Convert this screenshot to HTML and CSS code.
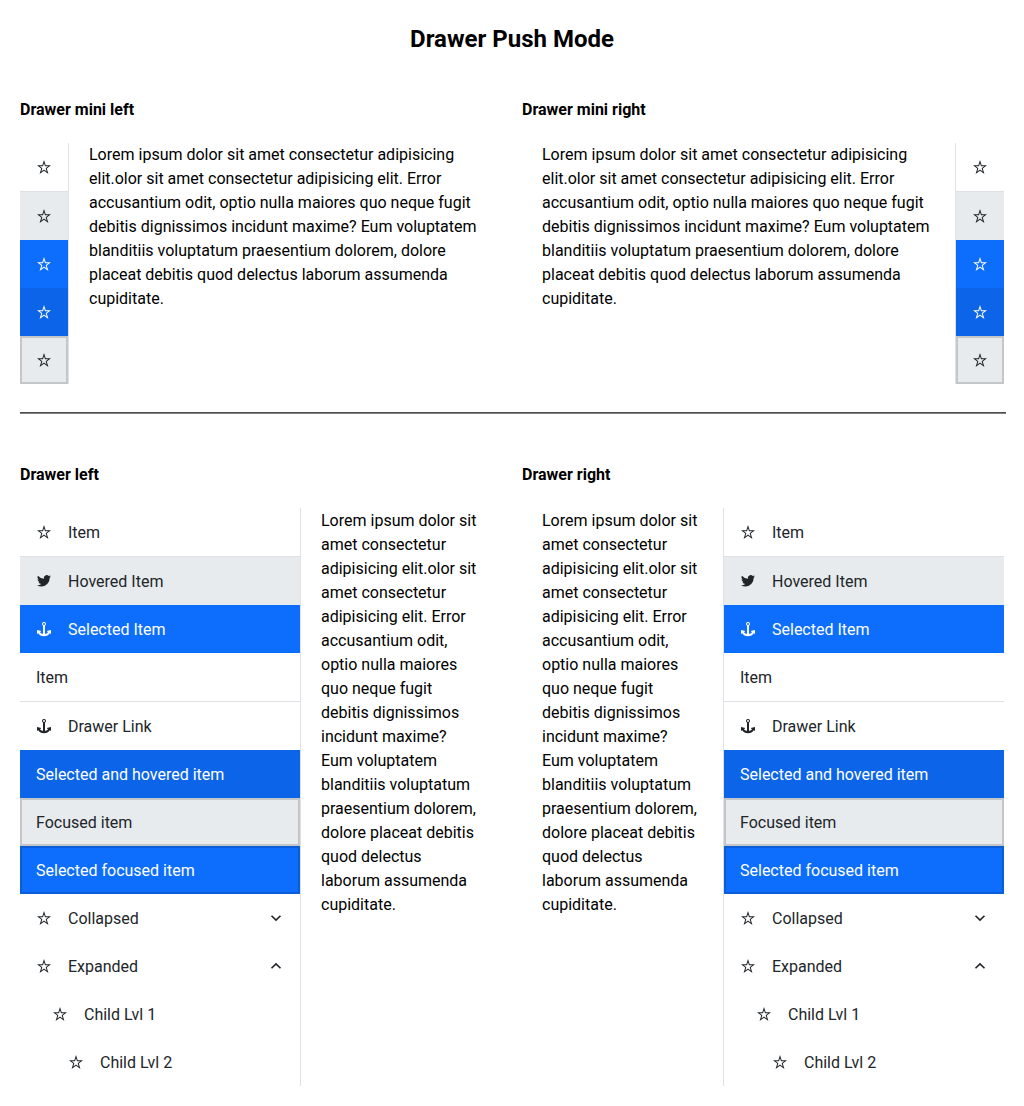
FILE: index.html
```html
<!DOCTYPE html>
<html lang="en">
<head>
<meta charset="utf-8">
<title>Drawer Push Mode</title>
<link rel="stylesheet" href="styles.css">
</head>
<body>
<svg class="sprite" aria-hidden="true">
  <symbol id="star" viewBox="0 0 16 16"><path fill-rule="evenodd" d="M8 1l1.700 5.200H15l-4.200 3.400L12.400 15 8 11.800 3.600 15l1.600-5.400L1 6.200h5.300zM8 4.200L7 7.200H3.850l2.500 2.050-1 3.250L8 10.600l2.650 1.900-1-3.250 2.500-2.050H9z"/></symbol>
  <symbol id="twitter" viewBox="0 0 16 16"><path d="M15 3.500a5.700 5.700 0 0 1-1.650.450 2.900 2.900 0 0 0 1.260-1.590 5.700 5.700 0 0 1-1.820.7 2.870 2.870 0 0 0-4.890 2.620A8.150 8.150 0 0 1 1.980 2.680a2.870 2.870 0 0 0 .890 3.830 2.900 2.900 0 0 1-1.300-.360v.040c0 1.390.990 2.550 2.300 2.810a2.900 2.900 0 0 1-1.300.050 2.870 2.870 0 0 0 2.680 1.990A5.760 5.760 0 0 1 1 12.230a8.130 8.130 0 0 0 4.400 1.290c5.280 0 8.170-4.380 8.170-8.170v-.370A5.800 5.800 0 0 0 15 3.500z"/></symbol>
  <symbol id="anchor" viewBox="0 0 16 16"><path fill-rule="evenodd" d="M8 1a2 2 0 0 1 1 3.730V12.800c1.500-.2 2.500-.8 3-1.600L10.700 10 15 9v4l-1.200-.7C12.700 14.200 10.600 15.200 8 15.200s-4.700-1-5.800-2.900L1 13V9l4.300 1L4 11.200c.5.8 1.500 1.400 3 1.600V4.730A2 2 0 0 1 8 1zm0 1a1 1 0 1 0 0 2 1 1 0 0 0 0-2z"/></symbol>
  <symbol id="down" viewBox="0 0 16 16"><path d="M3.500 5.700L8 10.100l4.500-4.400" fill="none" stroke="currentColor" stroke-width="1.600"/></symbol>
  <symbol id="up" viewBox="0 0 16 16"><path d="M3.500 10.300L8 5.900l4.500 4.400" fill="none" stroke="currentColor" stroke-width="1.600"/></symbol>
</svg>
<h1 class="title">Drawer Push Mode</h1>
<main>
  <div class="grid mini-grid">
    <section>
      <h2 class="heading">Drawer mini left</h2>
      <div class="container">
        <ul class="drawer mini">
          <li class="item"><svg class="icon"><use href="#star"/></svg></li>
          <li class="separator"></li>
          <li class="item hovered"><svg class="icon"><use href="#star"/></svg></li>
          <li class="item selected"><svg class="icon"><use href="#star"/></svg></li>
          <li class="item selected hovered"><svg class="icon"><use href="#star"/></svg></li>
          <li class="item focused"><svg class="icon"><use href="#star"/></svg></li>
        </ul>
        <div class="content">Lorem ipsum dolor sit amet consectetur adipisicing elit.olor sit amet consectetur adipisicing elit. Error accusantium odit, optio nulla maiores quo neque fugit debitis dignissimos incidunt maxime? Eum voluptatem blanditiis voluptatum praesentium dolorem, dolore placeat debitis quod delectus laborum assumenda cupiditate.</div>
      </div>
    </section>
    <section>
      <h2 class="heading">Drawer mini right</h2>
      <div class="container right">
        <ul class="drawer mini">
          <li class="item"><svg class="icon"><use href="#star"/></svg></li>
          <li class="separator"></li>
          <li class="item hovered"><svg class="icon"><use href="#star"/></svg></li>
          <li class="item selected"><svg class="icon"><use href="#star"/></svg></li>
          <li class="item selected hovered"><svg class="icon"><use href="#star"/></svg></li>
          <li class="item focused"><svg class="icon"><use href="#star"/></svg></li>
        </ul>
        <div class="content">Lorem ipsum dolor sit amet consectetur adipisicing elit.olor sit amet consectetur adipisicing elit. Error accusantium odit, optio nulla maiores quo neque fugit debitis dignissimos incidunt maxime? Eum voluptatem blanditiis voluptatum praesentium dolorem, dolore placeat debitis quod delectus laborum assumenda cupiditate.</div>
      </div>
    </section>
  </div>
  <hr class="rule">
  <div class="grid full-grid">
    <section>
      <h2 class="heading">Drawer left</h2>
      <div class="container">
        <ul class="drawer">
          <li class="item"><svg class="icon"><use href="#star"/></svg><span class="label">Item</span></li>
          <li class="separator"></li>
          <li class="item hovered"><svg class="icon"><use href="#twitter"/></svg><span class="label">Hovered Item</span></li>
          <li class="item selected"><svg class="icon"><use href="#anchor"/></svg><span class="label">Selected Item</span></li>
          <li class="item"><span class="label">Item</span></li>
          <li class="separator"></li>
          <li class="item"><svg class="icon"><use href="#anchor"/></svg><span class="label">Drawer Link</span></li>
          <li class="item selected hovered"><span class="label">Selected and hovered item</span></li>
          <li class="item focused"><span class="label">Focused item</span></li>
          <li class="item selected focused"><span class="label">Selected focused item</span></li>
          <li class="item"><svg class="icon"><use href="#star"/></svg><span class="label">Collapsed</span><svg class="icon toggle"><use href="#down"/></svg></li>
          <li class="item"><svg class="icon"><use href="#star"/></svg><span class="label">Expanded</span><svg class="icon toggle"><use href="#up"/></svg></li>
          <li class="item level-1"><svg class="icon"><use href="#star"/></svg><span class="label">Child Lvl 1</span></li>
          <li class="item level-2"><svg class="icon"><use href="#star"/></svg><span class="label">Child Lvl 2</span></li>
        </ul>
        <div class="content">Lorem ipsum dolor sit amet consectetur adipisicing elit.olor sit amet consectetur adipisicing elit. Error accusantium odit, optio nulla maiores quo neque fugit debitis dignissimos incidunt maxime? Eum voluptatem blanditiis voluptatum praesentium dolorem, dolore placeat debitis quod delectus laborum assumenda cupiditate.</div>
      </div>
    </section>
    <section>
      <h2 class="heading">Drawer right</h2>
      <div class="container right">
        <ul class="drawer">
          <li class="item"><svg class="icon"><use href="#star"/></svg><span class="label">Item</span></li>
          <li class="separator"></li>
          <li class="item hovered"><svg class="icon"><use href="#twitter"/></svg><span class="label">Hovered Item</span></li>
          <li class="item selected"><svg class="icon"><use href="#anchor"/></svg><span class="label">Selected Item</span></li>
          <li class="item"><span class="label">Item</span></li>
          <li class="separator"></li>
          <li class="item"><svg class="icon"><use href="#anchor"/></svg><span class="label">Drawer Link</span></li>
          <li class="item selected hovered"><span class="label">Selected and hovered item</span></li>
          <li class="item focused"><span class="label">Focused item</span></li>
          <li class="item selected focused"><span class="label">Selected focused item</span></li>
          <li class="item"><svg class="icon"><use href="#star"/></svg><span class="label">Collapsed</span><svg class="icon toggle"><use href="#down"/></svg></li>
          <li class="item"><svg class="icon"><use href="#star"/></svg><span class="label">Expanded</span><svg class="icon toggle"><use href="#up"/></svg></li>
          <li class="item level-1"><svg class="icon"><use href="#star"/></svg><span class="label">Child Lvl 1</span></li>
          <li class="item level-2"><svg class="icon"><use href="#star"/></svg><span class="label">Child Lvl 2</span></li>
        </ul>
        <div class="content">Lorem ipsum dolor sit amet consectetur adipisicing elit.olor sit amet consectetur adipisicing elit. Error accusantium odit, optio nulla maiores quo neque fugit debitis dignissimos incidunt maxime? Eum voluptatem blanditiis voluptatum praesentium dolorem, dolore placeat debitis quod delectus laborum assumenda cupiditate.</div>
      </div>
    </section>
  </div>
</main>
</body>
</html>
```
FILE: styles.css
```css
* { box-sizing: border-box; }
body {
  margin: 0;
  padding: 20px;
  background: #fff;
  color: #000;
  font: 16px/24px Roboto, sans-serif;
}
.sprite { display: none; }
.title {
  margin: 0;
  font-size: 24px;
  line-height: 38px;
  font-weight: 700;
  text-align: center;
}
.grid {
  display: grid;
  grid-template-columns: 1fr 1fr;
  gap: 20px;
}
.mini-grid { padding-top: 40px; }
.heading {
  margin: 0 0 21px;
  font-size: 16px;
  line-height: 24px;
  font-weight: 700;
}
.container { display: flex; }
.container.right { flex-direction: row-reverse; }
.drawer {
  flex: none;
  width: 281px;
  margin: 0;
  padding: 0;
  list-style: none;
  color: #212529;
  border-right: 1px solid #dee2e6;
}
.drawer.mini { width: 49px; }
.right .drawer {
  border-right: 0;
  border-left: 1px solid #dee2e6;
}
.item {
  display: flex;
  align-items: center;
  gap: 16px;
  height: 48px;
  padding: 0 16px;
}
.label { padding-top: 2px; }
.separator { height: 1px; background: #dee2e6; }
.hovered, .focused { background: #e7ebee; }
.selected { background: #0d6efd; color: #fff; }
.selected.hovered { background: #0c65e9; }
.focused { box-shadow: inset 0 0 0 2px #c3c7ca; }
.selected.focused { box-shadow: inset 0 0 0 2px #0b5ed7; }
.level-1 { padding-left: 32px; }
.level-2 { padding-left: 48px; }
.icon {
  flex: none;
  width: 16px;
  height: 16px;
  fill: currentColor;
}
.toggle { margin-left: auto; }
.content { flex: 1; padding: 0 20px; }
.full-grid .content { padding-top: 1px; }
.rule {
  width: 986px;
  height: 2px;
  margin: 28px 0 49px;
  border: 0;
  border-top: 1px solid #4d4d4d;
  border-bottom: 1px solid #808080;
}
```
